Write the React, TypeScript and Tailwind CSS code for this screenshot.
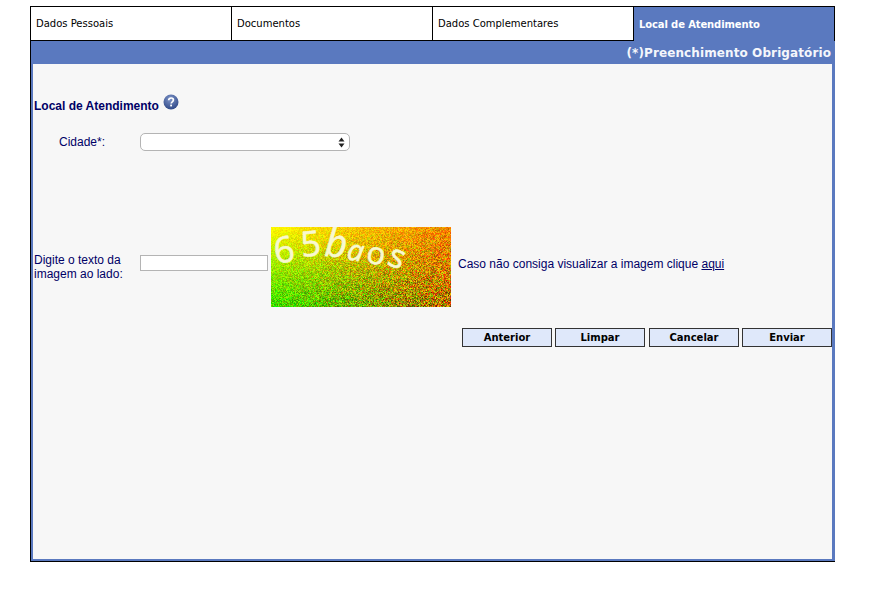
import { useMemo } from 'react';

const tabs = ['Dados Pessoais', 'Documentos', 'Dados Complementares'];
const buttons = ['Anterior', 'Limpar', 'Cancelar', 'Enviar'];

const clamp = (n: number) => Math.max(0, Math.min(255, n)) | 0;

// captcha background: a noisy gradient, seeded so it stays the same on every load
function CaptchaNoise() {
    const cells = useMemo(() => {
        const out: { x: number; y: number; fill: string }[] = [];
        let seed = 1234;
        const rnd = () => {
            seed = (seed * 16807) % 2147483647;
            return seed / 2147483647;
        };
        for (let y = 0; y < 80; y++) {
            for (let x = 0; x < 180; x++) {
                const u = x / 180;
                const v = y / 80;
                const amp = 20 + (u + v) * 70;
                const r = 255 - 200 * v * (1 - u) - 75 * v * u + (rnd() - 0.5) * amp * 1.3;
                const g = 250 - 115 * u - 25 * v + (rnd() - 0.5) * amp * 1.3;
                const b = rnd() > 0.9 ? 30 * u : 0;
                out.push({ x, y, fill: `rgb(${clamp(r)},${clamp(g)},${clamp(b)})` });
            }
        }
        return out;
    }, []);

    return (
        <svg width="180" height="80" viewBox="0 0 180 80" className="block shrink-0">
            {cells.map(c => (
                <rect key={`${c.x}-${c.y}`} x={c.x} y={c.y} width="1" height="1" fill={c.fill} />
            ))}
            <g fill="#f8f8cf" stroke="#f8f8cf" strokeWidth="0.6" fontFamily="'Open Sans', sans-serif">
                <text transform="translate(5 37) rotate(-10)" fontSize="36">6</text>
                <text transform="translate(31 30) rotate(-6)" fontSize="35">5</text>
                <text transform="translate(53 29) rotate(4)" fontSize="39" fontStyle="italic">b</text>
                <text transform="translate(75 32) rotate(10)" fontSize="29" fontStyle="italic">a</text>
                <text transform="translate(94 35) rotate(12)" fontSize="31">o</text>
                <text transform="translate(115 37) rotate(22)" fontSize="33">s</text>
            </g>
        </svg>
    );
}

export default function App() {
    return (
        <div className="w-[871px] h-[591px] bg-white pt-[6px] pl-[30px] font-['Liberation_Sans',sans-serif] text-[12px] text-[#000066]">
            <div className="w-[805px] h-[556px] flex flex-col border-b border-black">
                {/* Tabs */}
                <div className="flex h-[35px] font-['DejaVu_Sans',sans-serif] text-[10px] text-black">
                    {tabs.map(t => (
                        <div key={t} className="w-[201px] flex items-center pl-[5px] border-t border-b border-l border-black">
                            {t}
                        </div>
                    ))}
                    <div className="flex-1 flex items-center pl-[5px] bg-[#5a79bf] border-t border-l border-r border-black font-bold text-white tracking-[-0.12px]">
                        Local de Atendimento
                    </div>
                </div>

                {/* Required fields bar */}
                <div className="h-[23px] bg-[#5a79bf] border-l border-black flex items-center justify-end pr-[4px] font-['DejaVu_Sans',sans-serif] font-bold text-[12px] tracking-[0.1px] text-[#f4f6fb]">
                    (*)Preenchimento Obrigatório
                </div>

                {/* Form */}
                <div className="flex-1 flex border-l border-black">
                    <div className="flex-1 bg-[#f7f7f7] border-l-2 border-r-[3px] border-b-2 border-[#5a79bf] flex flex-col">
                        <div className="flex items-center gap-[4px] mt-[29px] ml-[1px] h-[22px]">
                            <span className="font-bold text-[12px] mt-[4px]">Local de Atendimento</span>
                            <svg width="16" height="16" viewBox="0 0 16 16" className="-mt-[4px]">
                                <defs>
                                    <radialGradient id="help" cx="45%" cy="30%" r="75%">
                                        <stop offset="0%" stopColor="#7f95c8" />
                                        <stop offset="100%" stopColor="#2a4484" />
                                    </radialGradient>
                                </defs>
                                <circle cx="8" cy="8" r="7.5" fill="url(#help)" />
                                <path d="M5.7 6.2c0-1.4 1-2.2 2.4-2.2s2.3.8 2.3 2c0 1.9-2.2 1.7-2.2 3.6" fill="none" stroke="#fff" strokeWidth="1.7" />
                                <rect x="7.2" y="10.6" width="1.8" height="1.8" fill="#fff" />
                            </svg>
                        </div>

                        <div className="flex items-center mt-[18px] h-[18px]">
                            <span className="w-[107px] pl-[26px]">Cidade*:</span>
                            <div className="w-[210px] h-[18px] bg-white border border-[#b4b4b4] rounded-[5px] flex items-center justify-end pr-[4px]">
                                <svg width="7" height="11" viewBox="0 0 7 11">
                                    <path d="M3.5 0.5L6.5 4.5H0.5Z M3.5 10.5L0.5 6.5H6.5Z" fill="#222" />
                                </svg>
                            </div>
                        </div>

                        <div className="flex mt-[76px] h-[80px]">
                            <span className="w-[107px] pl-[1px] pt-[26px] leading-[14px]">
                                Digite o texto da
                                <br />
                                imagem ao lado:
                            </span>
                            <div className="w-[128px] h-[16px] mt-[28px] bg-white border border-[#b4b4b4] mr-[3px]" />
                            <CaptchaNoise />
                            <span className="ml-[7px] mt-[28px]">
                                Caso não consiga visualizar a imagem clique <a className="underline">aqui</a>
                            </span>
                        </div>

                        <div className="flex justify-end mt-[21px] font-['DejaVu_Sans',sans-serif] font-bold text-[10px] text-black">
                            <div className="flex gap-[3px]">
                                {buttons.slice(0, 2).map(b => (
                                    <button key={b} className="w-[90px] h-[19px] bg-[#dfe8fa] border border-[#333]">
                                        {b}
                                    </button>
                                ))}
                            </div>
                            <div className="flex gap-[3px] ml-[4px]">
                                {buttons.slice(2).map(b => (
                                    <button key={b} className="w-[90px] h-[19px] bg-[#dfe8fa] border border-[#333]">
                                        {b}
                                    </button>
                                ))}
                            </div>
                        </div>
                    </div>
                </div>
            </div>
        </div>
    );
}
